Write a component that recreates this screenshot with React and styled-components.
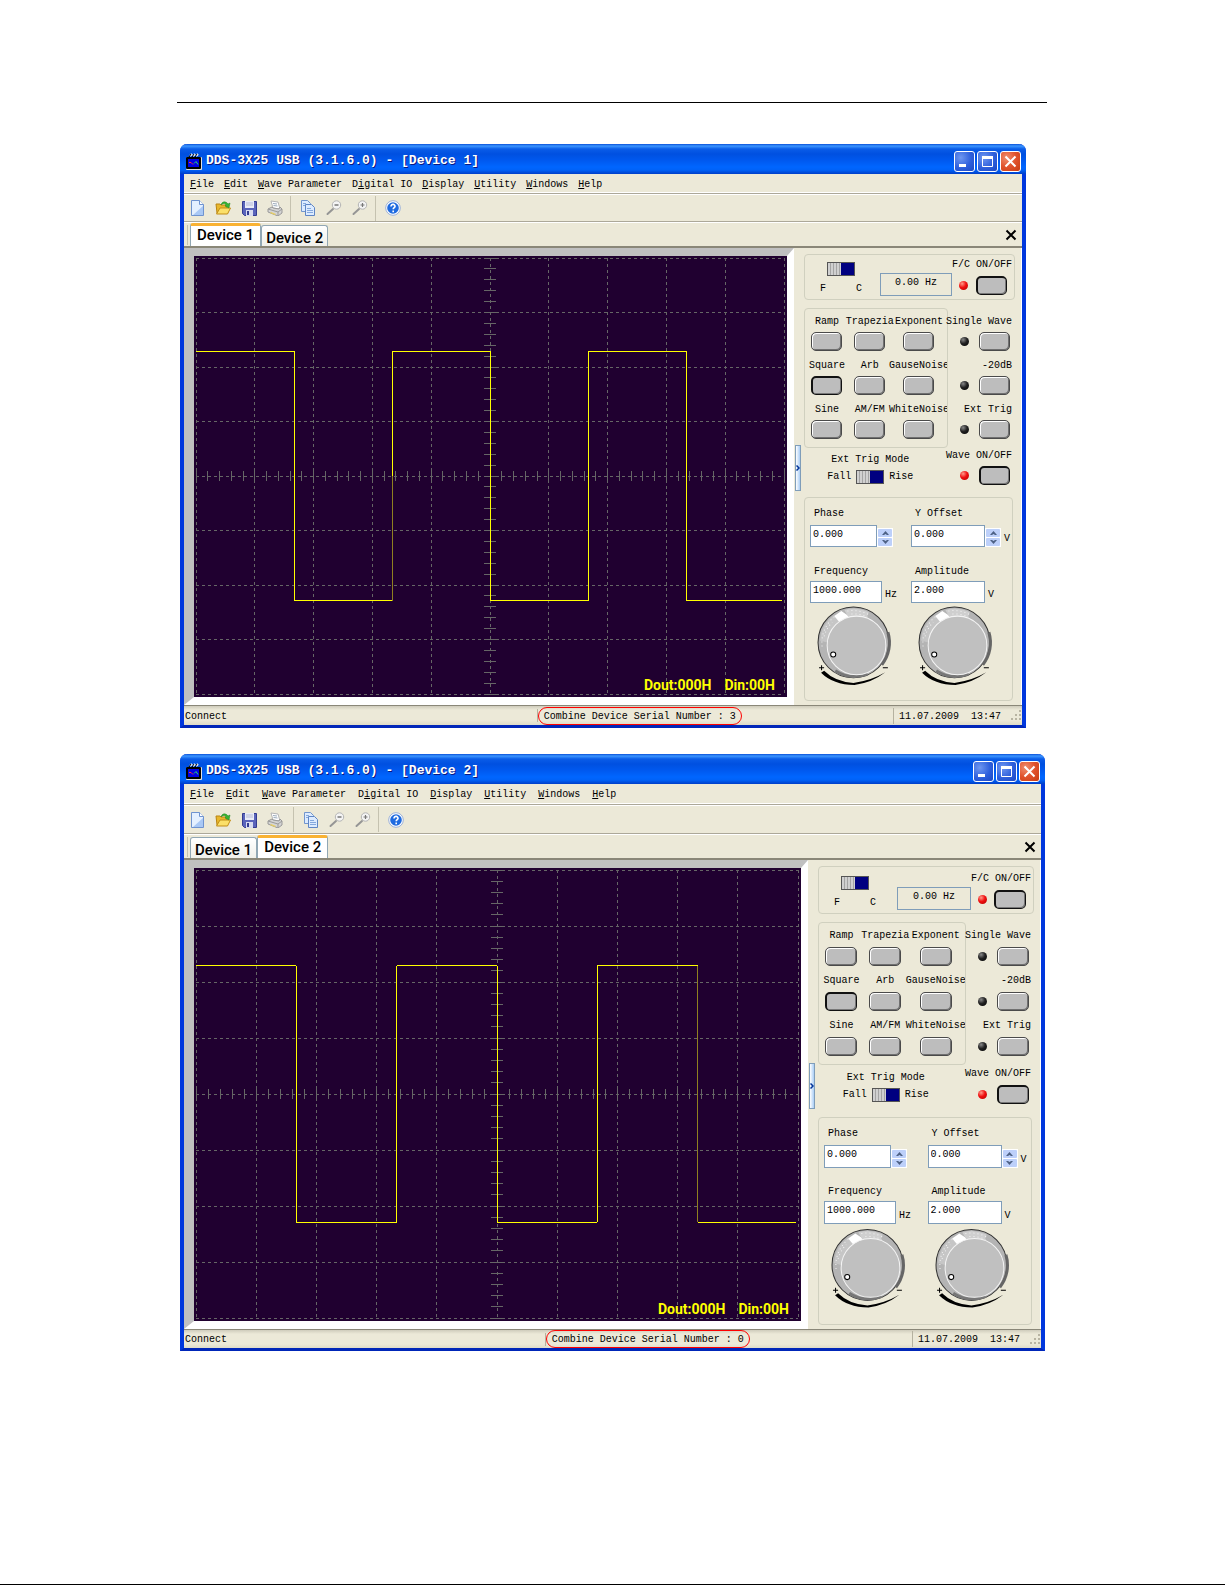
import React, { useId, useState } from "react"
import styled, { createGlobalStyle, css, ThemeProvider } from "styled-components"

const compact = {
  insetRight: "21px",
  menuHeight: "20px",
  menuGap: "10px",
  toolHeight: "28px",
  toolPad: "7px",
  statusHeight: "20px",
  panelWidth: "228px",
  meterHeight: "46px",
  buttonWidth: "31px",
  labelGap: "3px",
  modeTop: "0px",
  modeBottom: "12px",
  fieldHeight: "22px",
  fieldGap: "18px",
  readoutWidth: "72px",
  knobHeight: "83px",
}

const roomy = {
  insetRight: "2px",
  menuHeight: "21px",
  menuGap: "12px",
  toolHeight: "29px",
  toolPad: "10px",
  statusHeight: "19px",
  panelWidth: "233px",
  meterHeight: "48px",
  buttonWidth: "32px",
  labelGap: "4px",
  modeTop: "1px",
  modeBottom: "13px",
  fieldHeight: "23px",
  fieldGap: "17px",
  readoutWidth: "74px",
  knobHeight: "86px",
}

const GlobalStyle = createGlobalStyle`
  * {
    box-sizing: border-box;
  }

  body {
    margin: 0;
    background: #fff;
    color: #000;
    font-family: "Liberation Mono", "Courier New", monospace;
    font-size: 10px;
    line-height: 14px;
  }

  button,
  input {
    margin: 0;
    padding: 0;
    border: 0;
    font: inherit;
    color: inherit;
  }

  svg {
    display: block;
  }
`

const Page = styled.main`
  min-height: 100vh;
  padding: 102px 178px 0 177px;
  border-bottom: 1px solid #000;
`

const Rule = styled.hr`
  height: 1px;
  margin: 0 0 41px;
  border: 0;
  background: #000;
`

const StyledWindow = styled.section`
  margin: 0 ${({ theme }) => theme.insetRight} 26px 3px;
  border: solid #0037dd;
  border-width: 0 4px 3px;
  border-bottom-color: #0026b8;
  border-radius: 7px 7px 0 0;
  background: #ece9d8;
`

const TitleBar = styled.header`
  display: flex;
  align-items: center;
  gap: 4px;
  height: 30px;
  margin: 0 -4px;
  padding: 4px 5px 0 6px;
  border-radius: 7px 7px 0 0;
  background: linear-gradient(
    #0a50d8 0,
    #3c96ff 2px,
    #0a5ce8 5px,
    #0050e0 10px,
    #0058ee 16px,
    #0066ff 23px,
    #0062f8 26px,
    #003ec8 30px
  );

  h1 {
    flex: 1;
    margin: 0;
    font-size: 13px;
    font-weight: 700;
    line-height: 16px;
    white-space: pre;
    color: #fff;
    text-shadow: 1px 1px #0a1883;
  }
`

const CaptionButtons = styled.div`
  display: flex;
  gap: 2px;
`

const CaptionButton = styled.button`
  display: grid;
  place-items: center;
  width: 21px;
  height: 21px;
  border: 1px solid #fff;
  border-radius: 3px;
  background: ${({ $close }) =>
    $close
      ? "radial-gradient(circle at 30% 30%, #f09070, #e0522c 50%, #c83c12)"
      : "radial-gradient(circle at 30% 30%, #6f97f0, #2e5fdc 55%, #1c48c4)"};
`

const MenuBar = styled.nav`
  display: flex;
  align-items: center;
  gap: ${({ theme }) => theme.menuGap};
  height: ${({ theme }) => theme.menuHeight};
  padding: 2px 6px 0;
  border-bottom: 1px solid #aca899;
  box-shadow: inset 0 -1px #fff;

  a {
    color: inherit;
    text-decoration: none;
    white-space: pre;
  }
`

const ToolBar = styled.div`
  display: flex;
  align-items: center;
  height: ${({ theme }) => theme.toolHeight};
  padding-left: 5px;
  border-top: 1px solid #fff;
  border-bottom: 1px solid #aca899;
`

const ToolGroup = styled.div`
  display: flex;
  align-items: center;
  gap: 10px;
  height: 25px;
  padding-right: ${({ theme }) => theme.toolPad};

  & + & {
    padding-left: 9px;
    padding-right: 7px;
    border-left: 1px solid #c5c2b0;
  }
`

const ToolButton = styled.button`
  width: 16px;
  height: 16px;
  background: none;
`

const TabBar = styled.div`
  display: flex;
  align-items: flex-end;
  height: 26px;
  padding: 0 5px 0 3px;
  border-top: 1px solid #fff;
  border-bottom: 2px solid #8a8778;
  font-family: Roboto, "Liberation Sans", sans-serif;

  &::before {
    content: "";
    align-self: center;
    width: 1px;
    height: 20px;
    margin-right: 2px;
    background: #c5c2b0;
  }
`

const Tab = styled.button`
  height: 21px;
  padding: 3px 4px 0;
  border: 1px solid #91a7b4;
  border-bottom: 0;
  border-radius: 3px 3px 0 0;
  background: linear-gradient(#fff, #f0f0ea);
  font-size: 15px;
  font-weight: 500;
  line-height: 16px;

  ${({ $active }) =>
    $active &&
    css`
      height: 23px;
      padding: 0 6px 2px;
      border-top: 3px solid #f9b233;
      background: #fff;
    `};
`

const CloseTab = styled.button`
  align-self: center;
  width: 12px;
  height: 12px;
  margin-left: auto;
  background: none;
`

const Client = styled.div`
  display: flex;
`

const Bezel = styled.div`
  display: flex;
  flex: 1;
  border: solid;
  border-width: 8px 7px 8px 10px;
  border-color: #c0c0c0 #fff #fff #c0c0c0;
  background: #200030;
`

const Screen = styled.div`
  position: relative;
  display: flex;
  flex: 1;
  flex-direction: column;
  padding: 2px 3px 3px 2px;

  svg {
    flex: 1 1 0;
    width: 100%;
    height: 0;
    overflow: visible;
  }
`

const Readings = styled.div`
  position: absolute;
  right: 12px;
  bottom: 4px;
  display: flex;
  gap: 13px;
  font: 700 14px/16px Roboto, "Liberation Sans", sans-serif;
  color: #ff0;
`

const Panel = styled.aside`
  display: flex;
  width: ${({ theme }) => theme.panelWidth};
  padding: 6px 6px 4px 1px;
  border-right: 1px solid #fff;
`

const Handle = styled.button`
  align-self: center;
  width: 6px;
  height: 46px;
  margin: 0 3px 20px 0;
  border: 1px solid #7f9db9;
  background: linear-gradient(90deg, #fff, #a9cdf5);

  svg {
    width: 4px;
    height: 6px;
  }
`

const Controls = styled.div`
  flex: 1;
`

const groupFrame = css`
  border: 1px solid #d0d0bf;
  border-radius: 4px;
`

const MeterGroup = styled.div`
  ${groupFrame};
  display: flex;
  align-items: flex-end;
  height: ${({ theme }) => theme.meterHeight};
  margin-bottom: 8px;
  padding: 0 2px 3px 15px;
`

const SourceSelect = styled.div`
  display: flex;
  flex-direction: column;
  align-items: center;
  gap: 6px;
  width: 42px;

  div {
    display: flex;
    justify-content: space-between;
    width: 100%;
  }
`

const SlideSwitch = styled.input`
  appearance: none;
  width: 28px;
  height: 14px;
  border: 1px solid #555;
  background: linear-gradient(#000080, #000080) right / 13px 100% no-repeat,
    repeating-linear-gradient(90deg, #d0d0d0 0 2px, #a4a4a4 2px 3px);
`

const Readout = styled.output`
  width: ${({ theme }) => theme.readoutWidth};
  height: 23px;
  margin-left: auto;
  padding: 2px;
  border: 1px solid #7f9db9;
  text-align: center;
`

const PowerBlock = styled.div`
  display: flex;
  flex-direction: column;
  gap: 4px;
  width: 60px;
  white-space: pre;

  div {
    display: flex;
    align-items: center;
    justify-content: space-between;
    padding: 0 5px 1px 7px;
  }
`

const PushButton = styled.button`
  width: ${({ theme }) => theme.buttonWidth};
  height: 19px;
  border: 1px solid #4a4a4a;
  border-radius: 5px;
  background: #bdbdbd;
  box-shadow: inset 1px 1px #fff, inset -1px -1px #707070;

  &[aria-pressed="true"] {
    border: 2px solid #111;
    border-right-width: 1px;
    border-bottom-width: 1px;
    box-shadow: inset -1px -1px #777;
  }
`

const Led = styled.span`
  width: 9px;
  height: 9px;
  border-radius: 50%;
  background: ${({ $on }) =>
    $on
      ? "radial-gradient(circle at 35% 30%, #ff9a8a, #f01010 45%, #b00000)"
      : "radial-gradient(circle at 35% 30%, #888, #222 45%, #000)"};
`

const WaveArea = styled.div`
  display: grid;
  grid-template-columns: minmax(0, 145fr) minmax(0, 67fr);
  margin-bottom: ${({ theme }) => theme.modeBottom};
`

const WaveGroup = styled.div`
  ${groupFrame};
  display: grid;
  grid-template-columns: minmax(0, 44fr) minmax(0, 42fr) minmax(0, 57fr);
  row-gap: 8px;
  padding: 6px 0 8px;
  overflow: hidden;
`

const WaveItem = styled.div`
  display: flex;
  flex-direction: column;
  align-items: center;
  gap: ${({ theme }) => theme.labelGap};
  white-space: pre;
`

const ChannelColumn = styled.div`
  display: flex;
  flex-direction: column;
  gap: 8px;
  padding-top: 7px;
`

const ChannelItem = styled.div`
  display: flex;
  flex-direction: column;
  align-items: flex-end;
  gap: ${({ theme }) => theme.labelGap};
  padding-right: 3px;
  white-space: pre;

  div {
    display: flex;
    align-items: center;
    gap: 10px;
    padding-right: 2px;
  }
`

const TriggerMode = styled.div`
  display: flex;
  flex-direction: column;
  align-items: center;
  gap: 3px;
  padding: 5px 12px 0 0;
  margin-top: ${({ theme }) => theme.modeTop};
  white-space: pre;

  div {
    display: flex;
    align-items: center;
    gap: 5px;
  }
`

const OutputSwitch = styled.div`
  margin-top: ${({ theme }) => theme.modeTop};
  padding-top: 1px;
`

const ParamGroup = styled.div`
  ${groupFrame};
  display: grid;
  grid-template-columns: minmax(0, 1fr) minmax(0, 1fr);
  row-gap: ${({ theme }) => theme.fieldGap};
  margin-right: 2px;
  padding: 9px 0 11px 5px;
`

const Field = styled.div`
  display: flex;
  flex-direction: column;
  gap: ${({ $tight }) => ($tight ? "2px" : "4px")};

  label {
    padding-left: 4px;
  }
`

const FieldRow = styled.div`
  display: flex;
  align-items: flex-end;

  span {
    padding: 0 0 1px 3px;
  }
`

const TextBox = styled.input`
  width: ${({ $width }) => $width};
  height: ${({ theme }) => theme.fieldHeight};
  padding: 0 2px 4px;
  border: 1px solid #7f9db9;
  background: #fff;
`

const Spinner = styled.div`
  display: grid;
  gap: 1px;
  padding: 1px;
  background: #fff;

  button {
    display: grid;
    place-items: center;
    width: 14px;
    height: 8px;
    border-radius: 1px;
    background: #bdd0fa;
  }
`

const KnobDrawing = styled.svg`
  width: 79px;
  height: ${({ theme }) => theme.knobHeight};
  margin: 1px 0 0 7px;
`

const StatusBar = styled.footer`
  display: flex;
  align-items: center;
  height: ${({ theme }) => theme.statusHeight};
  border-top: 1px solid #8a8778;
  background: linear-gradient(#cfccbc, #ece9d8 4px, #ece9d8 14px, #dedbc8);
  white-space: pre;
`

const StatusText = styled.div`
  width: 42.1%;
  padding: 2px 0 0 1px;
`

const Divider = styled.div`
  width: 1px;
  height: 13px;
  background: #b5b2a0;
`

const Serial = styled.div`
  padding: 2px 5px 0;
  border: 1px solid #f00;
  border-radius: 9px;
`

const Clock = styled.div`
  display: flex;
  gap: 12px;
  margin-left: auto;
  padding: 2px 10px 0 5px;
  border-left: 1px solid #b5b2a0;
`

const AppIcon = () => (
  <svg width="16" height="17" viewBox="0 0 16 17">
    <path d="M4 3l2-2M7 3l2-2M10 3l2-2" stroke="#fff" strokeWidth="2" />
    <path d="M3 4l2-3M6 4l2-3M9 4l2-3" stroke="#000" />
    <rect x="0" y="4" width="16" height="13" rx="1" fill="#e0e0e0" />
    <rect x="0" y="4" width="15" height="12" rx="1" fill="#000" />
    <rect x="2" y="6" width="11" height="8" fill="#0000e8" />
    <path d="M3 9.500h2l2 2" stroke="#f33" fill="none" />
    <path d="M8 10.500l2-2 2 3" stroke="#3d6" fill="none" />
  </svg>
)

const toolIcons = {
  New: (
    <>
      <path d="M2.500 .5h8l4 4v11h-12z" fill="#e4f0ff" stroke="#6f93cf" />
      <path d="M10.500 .5v4h4" fill="#fff" stroke="#6f93cf" />
      <path d="M4 15L14 6v9z" fill="#a9c8f5" />
    </>
  ),
  Open: (
    <>
      <path d="M1 4h4l1 1h6v8H2z" fill="#e8b72c" stroke="#b98412" />
      <path d="M1.500 14L5 8h10.500l-3 6z" fill="#fbe06a" stroke="#c18d17" />
      <path d="M6 5c1-4 5-4 7-1l2-1-1 5-4-2 1-1c-1-2-3-2-5 0z" fill="#37b531" stroke="#1c8220" strokeWidth=".5" />
    </>
  ),
  Save: (
    <>
      <path d="M1.500 1.500h14v14h-12l-2-2z" fill="#5a64bb" stroke="#343c91" />
      <path d="M4 1h9v7H4z" fill="#e9ecf8" />
      <path d="M5 3h7M5 5h7" stroke="#b5b9d6" />
      <path d="M5 10h7v6H5z" fill="#d8dcf0" />
      <path d="M6 11h2v4H6z" fill="#343c91" />
    </>
  ),
  Print: (
    <>
      <path d="M4 1l7 1 2 7-7-1z" fill="#fff" stroke="#b5b5b5" />
      <path d="M6 3.500l4 .5M6.500 5.500l4 .5" stroke="#9ab" />
      <path d="M1 9l4-2 1 1 6 1 1-2 2 2v4l-4 3-10-4z" fill="#d4d4d4" stroke="#999" />
      <path d="M1 9l10 3 4-3M11 12v4" fill="none" stroke="#9a9a9a" />
      <path d="M4 12l5 2-1 1-5-2z" fill="#e9cf62" />
    </>
  ),
  Copy: (
    <>
      <path d="M1.500 .5h6l3 3v8h-9z" fill="#dcebff" stroke="#7195cd" />
      <path d="M5.500 4.500h6l3 3v8h-9z" fill="#dcebff" stroke="#5f86c5" />
      <path d="M7 8.500h4M7 10.500h6M7 12.500h6M3 3.500h3M3 5.500h2" stroke="#84a8dd" />
    </>
  ),
  "Zoom Out": (
    <>
      <path d="M1.500 14l5.500-5" stroke="#959595" strokeWidth="2" strokeLinecap="round" />
      <circle cx="10.500" cy="5" r="4.200" fill="#f4f4f4" stroke="#b4b4b4" />
      <path d="M8.500 5h4" stroke="#777" strokeWidth="1.500" />
    </>
  ),
  "Zoom In": (
    <>
      <path d="M1.500 14l5.500-5" stroke="#959595" strokeWidth="2" strokeLinecap="round" />
      <circle cx="10.500" cy="5" r="4.200" fill="#f4f4f4" stroke="#b4b4b4" />
      <path d="M8.500 5h4M10.500 3v4" stroke="#777" strokeWidth="1.200" />
    </>
  ),
  About: (
    <>
      <circle cx="8" cy="8" r="7.300" fill="#fff" stroke="#9ab0d8" />
      <circle cx="8" cy="8" r="5.800" fill="#1f6be0" />
      <path d="M6 6.500c0-3 4.300-2.600 4 0C9.800 7.700 8.200 7.700 8.200 9.300M8.200 10.600v1.600" fill="none" stroke="#fff" strokeWidth="1.600" />
    </>
  ),
}

const toolGroups = [
  ["New", "Open", "Save", "Print"],
  ["Copy", "Zoom Out", "Zoom In"],
  ["About"],
]

// [text before the access key, access key, rest]
const menus = [
  ["", "F", "ile"],
  ["", "E", "dit"],
  ["", "W", "ave Parameter"],
  ["D", "i", "gital IO"],
  ["", "D", "isplay"],
  ["", "U", "tility"],
  ["", "W", "indows"],
  ["", "H", "elp"],
]

const waves = [
  "Ramp",
  "Trapezia",
  "Exponent",
  "Square",
  "Arb",
  "GauseNoise",
  "Sine",
  "AM/FM",
  "WhiteNoise",
]

const HIGH = 21.4
const LOW = 78.6
const pct = value => `${value}%`
const range = count => Array.from({ length: count }, (_, i) => i)

const Line = ({ x1, y1, x2, y2, ...rest }) => (
  <line x1={pct(x1)} y1={pct(y1)} x2={pct(x2)} y2={pct(y2)} {...rest} />
)

// A tick keeps its length in pixels while its centre follows the grid.
const Tick = ({ x, y, vertical }) => (
  <svg x={pct(x)} y={pct(y)} width="1" height="1" overflow="visible">
    <path d={vertical ? "M0 -5v10" : "M-6 0h12"} stroke="#666" />
  </svg>
)

const Trace = ({ dim }) => (
  <g stroke="#ff0" strokeWidth="1">
    {range(6).map(i => {
      const x = (i * 100) / 6
      const level = i % 2 ? LOW : HIGH
      const next = i % 2 ? HIGH : LOW
      const end = x + 100 / 6
      return (
        <g key={i}>
          <Line x1={x} y1={level} x2={i === 5 ? 99.7 : end} y2={level} />
          {i < 5 && (
            <>
              <Line
                x1={end}
                y1={level}
                x2={end}
                y2={50}
                stroke={dim.includes(`${i}a`) ? "#8f8020" : "#ff0"}
              />
              <Line
                x1={end}
                y1={50}
                x2={end}
                y2={next}
                stroke={dim.includes(`${i}b`) ? "#8f8020" : "#ff0"}
              />
            </>
          )}
        </g>
      )
    })}
  </g>
)

const Scope = ({ dim }) => (
  <Bezel>
    <Screen>
      <svg shapeRendering="crispEdges" role="img" aria-label="Square wave">
        <g stroke="#666" strokeDasharray="3 3">
          {range(11).map(i => (
            <Line key={i} x1={i * 10} y1={0} x2={i * 10} y2={100} />
          ))}
          {range(9).map(i => (
            <Line key={i} x1={0} y1={i * 12.5} x2={100} y2={i * 12.5} />
          ))}
        </g>
        {range(51).map(i => (
          <Tick key={i} x={i * 2} y={50} vertical />
        ))}
        {range(41).map(i => (
          <Tick key={i} x={50} y={i * 2.5} />
        ))}
        <Trace dim={dim} />
      </svg>
      <Readings>
        <span>Dout:000H</span>
        <span>Din:00H</span>
      </Readings>
    </Screen>
  </Bezel>
)

const Knob = ({ label }) => (
  <KnobDrawing viewBox="0 0 78 82" role="img" aria-label={label}>
    <circle cx="36" cy="36" r="35" fill="#b4b4b4" stroke="#333" />
    <path d="M3 34A33 33 0 0 1 17 9l7 9A28 28 0 0 0 10 36z" fill="#c6c6c6" />
    <path d="M17 10l7-5 9 6-10 6z" fill="#fff" />
    <path d="M27 4a33 33 0 0 1 24 2l-2 6a30 30 0 0 0-18-1z" fill="#cfcfcf" />
    <path
      d="M5 40A33 33 0 0 1 18 10M30 5a32 32 0 0 1 22 4M7 30A32 32 0 0 1 15 16M34 8a30 30 0 0 1 16 3"
      fill="none"
      stroke="#f2f2f2"
      strokeDasharray="1 3"
    />
    <path d="M70 26a35 35 0 0 1-6 32" fill="none" stroke="#666" strokeWidth="3" />
    <path d="M18 64a35 35 0 0 0 32 3" fill="none" stroke="#777" strokeWidth="3" />
    <circle cx="39" cy="39" r="29" fill="#c0c0c0" stroke="#f4f4f4" />
    <circle cx="16" cy="48" r="2.500" fill="#fff" stroke="#000" />
    <path d="M2 61h5M4.500 58.500v5M65 61h5" stroke="#000" />
    <path d="M7 64Q18 75 36 76Q53 74 67.500 65.500Q54 76 37 78Q16 78 4 66z" />
  </KnobDrawing>
)

const Channel = ({ label, on, pressed }) => {
  const id = useId()
  return (
    <ChannelItem>
      <label htmlFor={id}>{label}</label>
      <div>
        <Led $on={on} />
        <PushButton id={id} type="button" aria-pressed={!!pressed} />
      </div>
    </ChannelItem>
  )
}

const Param = ({ label, value, unit, width, spin }) => {
  const id = useId()
  return (
    <Field $tight={!spin}>
      <label htmlFor={id}>{label}</label>
      <FieldRow>
        <TextBox id={id} defaultValue={value} $width={width} />
        {spin && (
          <Spinner>
            <button type="button" aria-label={`Increase ${label}`}>
              <svg width="7" height="4" viewBox="0 0 7 4">
                <path d="M0 4l3.500-4L7 4H5L3.500 3 2 4z" fill="#4d6185" />
              </svg>
            </button>
            <button type="button" aria-label={`Decrease ${label}`}>
              <svg width="7" height="4" viewBox="0 0 7 4">
                <path d="M0 0l3.500 4L7 0H5L3.500 1 2 0z" fill="#4d6185" />
              </svg>
            </button>
          </Spinner>
        )}
        {unit && <span>{unit}</span>}
      </FieldRow>
      {!spin && <Knob label={`${label} knob`} />}
    </Field>
  )
}

const ControlPanel = () => {
  const id = useId()
  const [wave, setWave] = useState("Square")

  return (
    <Panel>
      <Handle type="button" aria-label="Collapse panel">
        <svg viewBox="0 0 4 6">
          <path d="M.5 .5L3 3 .5 5.500" fill="none" stroke="#003399" strokeWidth="1.500" />
        </svg>
      </Handle>
      <Controls>
        <MeterGroup>
          <SourceSelect>
            <SlideSwitch type="checkbox" defaultChecked aria-label="F or C" />
            <div>
              <span>F</span>
              <span>C</span>
            </div>
          </SourceSelect>
          <Readout>0.00 Hz</Readout>
          <PowerBlock>
            <label htmlFor={`${id}-fc`}>F/C ON/OFF</label>
            <div>
              <Led $on />
              <PushButton id={`${id}-fc`} type="button" aria-pressed />
            </div>
          </PowerBlock>
        </MeterGroup>
        <WaveArea>
          <WaveGroup>
            {waves.map(name => (
              <WaveItem key={name}>
                <label htmlFor={`${id}-${name}`}>{name}</label>
                <PushButton
                  id={`${id}-${name}`}
                  type="button"
                  aria-pressed={wave === name}
                  onClick={() => setWave(name)}
                />
              </WaveItem>
            ))}
          </WaveGroup>
          <ChannelColumn>
            <Channel label="Single Wave" />
            <Channel label="-20dB" />
            <Channel label="Ext Trig" />
          </ChannelColumn>
          <TriggerMode>
            <label htmlFor={`${id}-trig`}>Ext Trig Mode</label>
            <div>
              <span>Fall</span>
              <SlideSwitch id={`${id}-trig`} type="checkbox" defaultChecked />
              <span>Rise</span>
            </div>
          </TriggerMode>
          <OutputSwitch>
            <Channel label="Wave ON/OFF" on pressed />
          </OutputSwitch>
        </WaveArea>
        <ParamGroup>
          <Param label="Phase" value="0.000" width="67px" spin />
          <Param label="Y Offset" value="0.000" unit="V" width="74px" spin />
          <Param label="Frequency" value="1000.000" unit="Hz" width="72px" />
          <Param label="Amplitude" value="2.000" unit="V" width="74px" />
        </ParamGroup>
      </Controls>
    </Panel>
  )
}

const DeviceWindow = ({ device, serial, metrics, dim }) => (
  <ThemeProvider theme={metrics}>
    <StyledWindow>
      <TitleBar>
        <AppIcon />
        <h1>{`DDS-3X25 USB (3.1.6.0) - [Device ${device}]`}</h1>
        <CaptionButtons>
          <CaptionButton type="button" aria-label="Minimize">
            <svg width="13" height="13">
              <path d="M1 10.500h7" stroke="#fff" strokeWidth="3" />
            </svg>
          </CaptionButton>
          <CaptionButton type="button" aria-label="Maximize">
            <svg width="13" height="13">
              <path d="M1.500 1.500h10v10h-10z" fill="none" stroke="#fff" />
              <path d="M1 2.500h11" stroke="#fff" strokeWidth="3" />
            </svg>
          </CaptionButton>
          <CaptionButton type="button" aria-label="Close" $close>
            <svg width="13" height="13">
              <path d="M1.500 1.500l10 10M11.500 1.500l-10 10" stroke="#fff" strokeWidth="2" />
            </svg>
          </CaptionButton>
        </CaptionButtons>
      </TitleBar>
      <MenuBar>
        {menus.map(([before, key, after]) => (
          <a key={key + after} href="#menu">
            {before}
            <u>{key}</u>
            {after}
          </a>
        ))}
      </MenuBar>
      <ToolBar>
        {toolGroups.map(group => (
          <ToolGroup key={group[0]}>
            {group.map(name => (
              <ToolButton key={name} type="button" aria-label={name}>
                <svg width="16" height="16" viewBox="0 0 16 16">
                  {toolIcons[name]}
                </svg>
              </ToolButton>
            ))}
          </ToolGroup>
        ))}
      </ToolBar>
      <TabBar>
        {[1, 2].map(n => (
          <Tab key={n} type="button" $active={n === device}>
            Device {n}
          </Tab>
        ))}
        <CloseTab type="button" aria-label="Close tab">
          <svg width="12" height="12">
            <path d="M1.500 1.500l9 9M10.500 1.500l-9 9" stroke="#000" strokeWidth="2" />
          </svg>
        </CloseTab>
      </TabBar>
      <Client>
        <Scope dim={dim} />
        <ControlPanel />
      </Client>
      <StatusBar>
        <StatusText>Connect</StatusText>
        <Divider />
        <Serial>Combine Device Serial Number : {serial}</Serial>
        <Clock>
          <span>11.07.2009</span>
          <span>13:47</span>
        </Clock>
        <svg width="11" height="11" fill="#b8b4a2">
          <path d="M8 0h2v2H8zM4 4h2v2H4zM8 4h2v2H8zM0 8h2v2H0zM4 8h2v2H4zM8 8h2v2H8z" />
        </svg>
      </StatusBar>
    </StyledWindow>
  </ThemeProvider>
)

const App = () => (
  <>
    <GlobalStyle />
    <Page>
      <Rule />
      <DeviceWindow device={1} serial={3} metrics={compact} dim={["1a"]} />
      <DeviceWindow device={2} serial={0} metrics={roomy} dim={["4a", "4b"]} />
    </Page>
  </>
)

export default App
